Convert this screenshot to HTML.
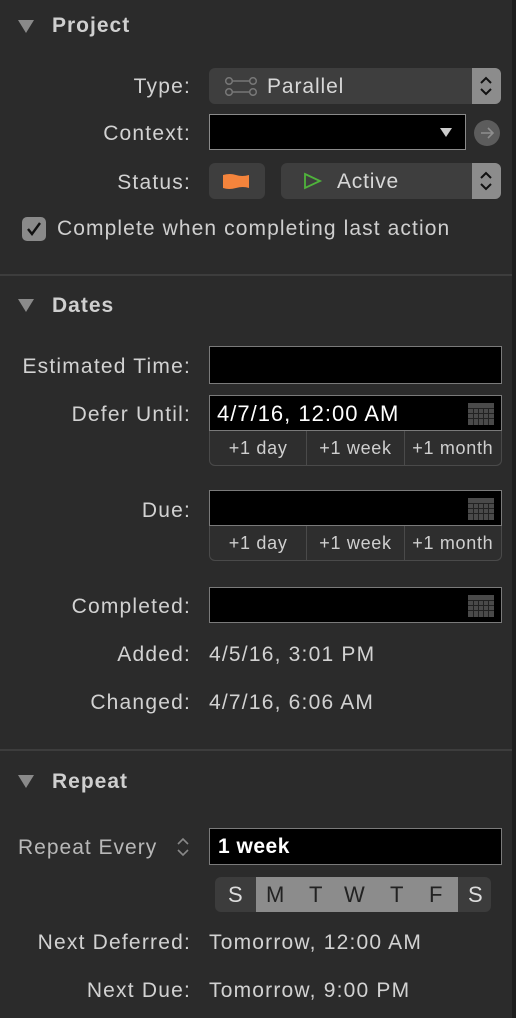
<!DOCTYPE html>
<html><head><style>
body{margin:0;width:516px;height:1018px;background:#2b2b2b;font-family:"Liberation Sans",sans-serif;color:#d2d2d2;position:relative;overflow:hidden}
.a{position:absolute}
.lbl{position:absolute;right:325px;font-size:21px;letter-spacing:1.2px;line-height:24px;white-space:nowrap}
.val{position:absolute;left:209px;font-size:21px;letter-spacing:1.2px;line-height:24px;white-space:nowrap}
.h{position:absolute;left:52px;font-size:21px;letter-spacing:1px;font-weight:bold;color:#cfcfcf}
.tri{position:absolute;left:18px;width:0;height:0;border-left:8px solid transparent;border-right:8px solid transparent;border-top:13px solid #8a8a8a}
.sep{position:absolute;left:0;width:512px;height:2px;background:#3d3d3d}
.pop{position:absolute;background:#3e3e3e;border-radius:6px}
.step{position:absolute;right:0;top:0;bottom:0;width:29px;background:#8c8c8c;border-radius:0 6px 6px 0}
.fld{position:absolute;left:209px;width:291px;background:#000;border:1px solid #7a7a7a;height:34px}
.btns{position:absolute;left:209px;width:291px;height:34px;border:1px solid #4a4a4a;border-top:none;border-radius:0 0 6px 6px;display:flex;background:#2e2e2e}
.btns div{flex:1;text-align:center;font-size:18px;letter-spacing:0.7px;line-height:34px;color:#cfcfcf;border-right:1px solid #4a4a4a}
.btns div:last-child{border-right:none}
.cal{position:absolute;right:7px;top:7px}
</style></head><body>
<div class="a" style="right:0;top:0;width:4px;height:1018px;background:#1e1e1e"></div>

<div class="tri" style="top:20px"></div>
<div class="h" style="top:14px">Project</div>

<div class="lbl" style="top:75px">Type:</div>
<div class="pop" style="left:209px;top:68px;width:292px;height:36px">
 <svg class="a" style="left:15px;top:9px" width="34" height="19"><g fill="none" stroke="#777" stroke-width="1.5"><circle cx="5" cy="4" r="3.3"/><circle cx="29" cy="4" r="3.3"/><circle cx="5" cy="15" r="3.3"/><circle cx="29" cy="15" r="3.3"/><path d="M8 4H26M8 15H26"/></g></svg>
 <div class="a" style="left:58px;top:7px;font-size:21px;letter-spacing:0.9px;color:#d8d8d8">Parallel</div>
 <div class="step"><svg width="29" height="36"><path d="M9 15l5-5 5 5M9 21l5 5 5-5" fill="none" stroke="#111" stroke-width="2"/></svg></div>
</div>

<div class="lbl" style="top:122px">Context:</div>
<div class="a" style="left:209px;top:114px;width:255px;height:34px;background:#000;border:1px solid #8a8a8a"></div>
<div class="a" style="left:440px;top:128px;border-left:6px solid transparent;border-right:6px solid transparent;border-top:9px solid #ccc"></div>
<div class="a" style="left:474px;top:120px;width:26px;height:26px;border-radius:50%;background:#5c5c5c"><svg width="26" height="26"><path d="M7 13H19M14 8l5 5-5 5" fill="none" stroke="#8e8e8e" stroke-width="1.6"/></svg></div>

<div class="lbl" style="top:171px">Status:</div>
<div class="pop" style="left:209px;top:163px;width:56px;height:36px"><svg class="a" style="left:13px;top:10px" width="28" height="17"><path d="M1 2Q8 0 14 2T27 2V15Q21 13 14 15T1 15Z" fill="#f4843c"/></svg></div>
<div class="pop" style="left:281px;top:163px;width:220px;height:36px">
 <svg class="a" style="left:22px;top:9px" width="20" height="18"><path d="M2 2L17 9 2 16Z" fill="none" stroke="#4fb33b" stroke-width="1.8"/></svg>
 <div class="a" style="left:56px;top:7px;font-size:21px;letter-spacing:0.8px;color:#d8d8d8">Active</div>
 <div class="step"><svg width="29" height="36"><path d="M9 15l5-5 5 5M9 21l5 5 5-5" fill="none" stroke="#111" stroke-width="2"/></svg></div>
</div>

<div class="a" style="left:22px;top:217px;width:24px;height:24px;border-radius:5px;background:#8a8a8a"><svg width="24" height="24"><path d="M6 12l4 5 8-11" fill="none" stroke="#111" stroke-width="2.4"/></svg></div>
<div class="a" style="left:57px;top:217px;font-size:21px;letter-spacing:1.1px;color:#cfcfcf;white-space:nowrap">Complete when completing last action</div>

<div class="sep" style="top:274px"></div>

<div class="tri" style="top:299px"></div>
<div class="h" style="top:294px">Dates</div>

<div class="lbl" style="top:355px">Estimated Time:</div>
<div class="fld" style="top:346px;height:36px"></div>

<div class="lbl" style="top:403px">Defer Until:</div>
<div class="fld" style="top:395px"><div class="a" style="left:7px;top:5px;font-size:22px;letter-spacing:1px;color:#fff;white-space:nowrap">4/7/16, 12:00 AM</div>
<svg class="cal" width="26" height="22"><rect width="26" height="22" fill="#4a4a4a"/><g fill="#222"><rect x="0" y="5" width="26" height="1"/><rect x="0" y="10" width="26" height="1"/><rect x="0" y="15" width="26" height="1"/><rect x="5" y="5" width="1" height="17"/><rect x="10" y="5" width="1" height="17"/><rect x="15" y="5" width="1" height="17"/><rect x="20" y="5" width="1" height="17"/></g></svg></div>
<div class="btns" style="top:431px"><div>+1 day</div><div>+1 week</div><div>+1 month</div></div>

<div class="lbl" style="top:499px">Due:</div>
<div class="fld" style="top:490px"><svg class="cal" width="26" height="22"><rect width="26" height="22" fill="#4a4a4a"/><g fill="#222"><rect x="0" y="5" width="26" height="1"/><rect x="0" y="10" width="26" height="1"/><rect x="0" y="15" width="26" height="1"/><rect x="5" y="5" width="1" height="17"/><rect x="10" y="5" width="1" height="17"/><rect x="15" y="5" width="1" height="17"/><rect x="20" y="5" width="1" height="17"/></g></svg></div>
<div class="btns" style="top:526px"><div>+1 day</div><div>+1 week</div><div>+1 month</div></div>

<div class="lbl" style="top:595px">Completed:</div>
<div class="fld" style="top:587px"><svg class="cal" width="26" height="22"><rect width="26" height="22" fill="#4a4a4a"/><g fill="#222"><rect x="0" y="5" width="26" height="1"/><rect x="0" y="10" width="26" height="1"/><rect x="0" y="15" width="26" height="1"/><rect x="5" y="5" width="1" height="17"/><rect x="10" y="5" width="1" height="17"/><rect x="15" y="5" width="1" height="17"/><rect x="20" y="5" width="1" height="17"/></g></svg></div>

<div class="lbl" style="top:643px">Added:</div><div class="val" style="top:643px">4/5/16, 3:01 PM</div>
<div class="lbl" style="top:691px">Changed:</div><div class="val" style="top:691px">4/7/16, 6:06 AM</div>

<div class="sep" style="top:749px"></div>

<div class="tri" style="top:775px"></div>
<div class="h" style="top:770px">Repeat</div>

<div class="a" style="left:18px;top:836px;font-size:21px;letter-spacing:1px;color:#b8b8b8;white-space:nowrap">Repeat Every</div>
<svg class="a" style="left:176px;top:836px" width="14" height="22"><path d="M2 8l5-5 5 5M2 14l5 5 5-5" fill="none" stroke="#888" stroke-width="1.6"/></svg>
<div class="fld" style="top:828px;height:35px"><div class="a" style="left:8px;top:6px;font-size:21px;letter-spacing:0.5px;font-weight:bold;color:#fff">1 week</div></div>

<div class="a" style="left:215px;top:877px;width:276px;height:35px;border-radius:6px;background:#3c3c3c;overflow:hidden;font-size:22px;line-height:35px">
 <div class="a" style="left:41px;top:0;width:202px;height:35px;background:#8c8c8c"></div>
 <div class="a" style="left:13px;color:#ddd">S</div>
 <div class="a" style="left:51px;color:#222">M</div>
 <div class="a" style="left:94px;color:#222">T</div>
 <div class="a" style="left:129px;color:#222">W</div>
 <div class="a" style="left:175px;color:#222">T</div>
 <div class="a" style="left:214px;color:#222">F</div>
 <div class="a" style="left:253px;color:#ddd">S</div>
</div>

<div class="lbl" style="top:931px">Next Deferred:</div><div class="val" style="top:931px">Tomorrow, 12:00 AM</div>
<div class="lbl" style="top:979px">Next Due:</div><div class="val" style="top:979px">Tomorrow, 9:00 PM</div>
</body></html>
